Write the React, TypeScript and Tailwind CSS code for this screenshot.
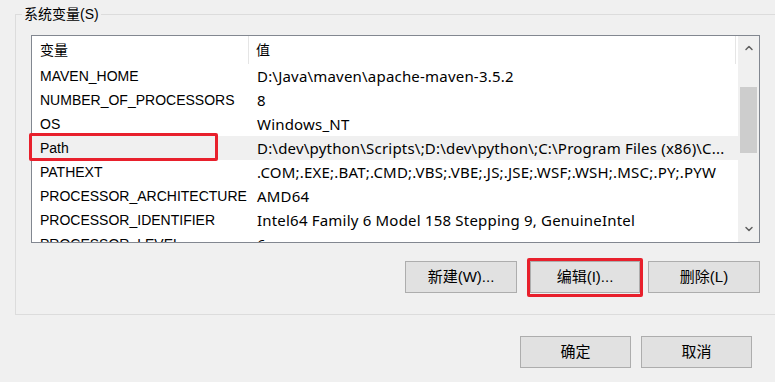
import { ChevronUp, ChevronDown } from "lucide-react"

const rows = [
  { name: "MAVEN_HOME", value: "D:\\Java\\maven\\apache-maven-3.5.2" },
  { name: "NUMBER_OF_PROCESSORS", value: "8" },
  { name: "OS", value: "Windows_NT" },
  {
    name: "Path",
    value: "D:\\dev\\python\\Scripts\\;D:\\dev\\python\\;C:\\Program Files (x86)\\C...",
    selected: true,
  },
  { name: "PATHEXT", value: ".COM;.EXE;.BAT;.CMD;.VBS;.VBE;.JS;.JSE;.WSF;.WSH;.MSC;.PY;.PYW" },
  { name: "PROCESSOR_ARCHITECTURE", value: "AMD64" },
  { name: "PROCESSOR_IDENTIFIER", value: "Intel64 Family 6 Model 158 Stepping 9, GenuineIntel" },
  { name: "PROCESSOR_LEVEL", value: "6" },
]

const font = "font-['Liberation_Sans','Noto_Sans_CJK_SC',sans-serif]"

const Button = ({ label, className }: { label: string; className?: string }) => (
  <button
    className={`h-[32px] bg-[#e1e1e1] border border-[#adadad] text-[15px] text-black ${className ?? ""}`}
  >
    {label}
  </button>
)

export default function App() {
  return (
    <div className={`relative w-[775px] h-[382px] bg-[#f0f0f0] overflow-hidden text-black ${font}`}>
      {/* 系统变量 group */}
      <div className="relative mt-[14px] ml-[15px] w-[775px] h-[301px] border border-r-0 border-[#dcdcdc]">
        <span className="absolute -top-[10px] left-[6px] px-[2px] bg-[#f0f0f0] text-[14px] leading-[18px]">
          系统变量(S)
        </span>

        <div className="ml-[15px] mt-[20px] w-[729px] h-[208px] border border-[#828790] bg-white flex overflow-hidden">
          <div className="w-[706px] flex flex-col">
            {/* header */}
            <div className="flex h-[28px] shrink-0 items-center text-[14px]">
              <div className="w-[217px] h-full pl-[8px] flex items-center border-r border-[#e5e5e5]">变量</div>
              <div className="w-[487px] h-full pl-[7px] flex items-center border-r border-[#e5e5e5]">值</div>
            </div>
            {rows.map((r) => (
              <div
                key={r.name}
                className={`flex h-[24px] shrink-0 items-center text-[14px] whitespace-nowrap ${
                  r.selected ? "bg-[#f0f0f0]" : ""
                }`}
              >
                <div className="w-[217px] pl-[8px] overflow-hidden">{r.name}</div>
                <div className="w-[487px] pl-[8px] overflow-hidden font-['Noto_Sans',sans-serif] text-[15px] leading-[24px] tracking-[0.2px]">
                  {r.value}
                </div>
              </div>
            ))}
          </div>
          {/* scrollbar */}
          <div className="w-[21px] h-full bg-[#f0f0f0] flex flex-col items-center">
            <div className="h-[22px] mt-[1px] flex items-center justify-center text-[#606060]">
              <ChevronUp size={12} strokeWidth={3} />
            </div>
            <div className="mt-[28px] w-[17px] h-[66px] bg-[#cdcdcd]" />
            <div className="flex-1" />
            <div className="h-[22px] mb-[2px] flex items-center justify-center text-[#606060]">
              <ChevronDown size={12} strokeWidth={3} />
            </div>
          </div>
        </div>

        <div className="flex mt-[18px] ml-[389px]">
          <Button label="新建(W)..." className="w-[112px]" />
          <Button label="编辑(I)..." className="w-[110px] ml-[13px]" />
          <Button label="删除(L)" className="w-[112px] ml-[8px]" />
        </div>
      </div>

      <div className="flex mt-[21px] ml-[520px] gap-[10px]">
        <Button label="确定" className="w-[111px]" />
        <Button label="取消" className="w-[111px]" />
      </div>

      {/* red annotation boxes */}
      <div className="absolute left-[29px] top-[133px] w-[189px] h-[28px] border-[3px] border-[#e8202c] rounded-[2px]" />
      <div className="absolute left-[527px] top-[258px] w-[116px] h-[39px] border-[3px] border-[#e8202c] rounded-[2px]" />
    </div>
  )
}
